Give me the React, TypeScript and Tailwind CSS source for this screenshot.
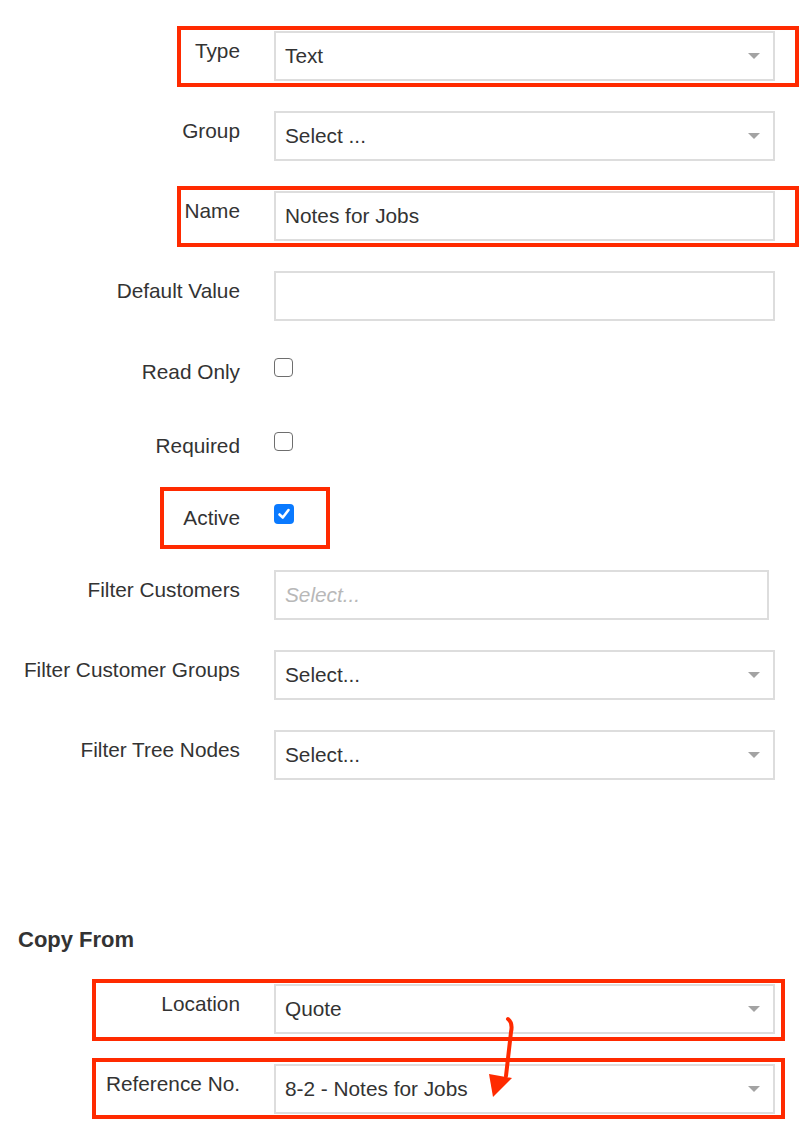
import React from "react";

const Arrow = () => (
  <svg width="12" height="6" viewBox="0 0 12 6" className="shrink-0">
    <path d="M0 0 L12 0 L6 6 Z" fill="#a3a3a3" />
  </svg>
);

function RedBox({ className }: { className: string }) {
  return <div className={"absolute border-4 border-[#ff2a00] pointer-events-none " + className} />;
}

function InputRow({
  label,
  value,
  select,
  placeholder,
  narrow,
  children,
}: {
  label: string;
  value?: string;
  select?: boolean;
  placeholder?: boolean;
  narrow?: boolean;
  children?: React.ReactNode;
}) {
  return (
    <div className="relative flex h-[50px] mb-[30px]">
      {children}
      <div className="w-[240px] shrink-0 text-right pt-[8px] text-[20.8px] leading-[24px] text-[#333]">{label}</div>
      <div
        className={
          "ml-[34px] h-[50px] border-2 border-[#dddddd] bg-white flex items-center pl-[9px] pr-[13px] " +
          (narrow ? "w-[495px]" : "w-[501px]")
        }
      >
        <span
          className={
            "flex-1 text-[20.8px] leading-[24px] " + (placeholder ? "italic text-[#b8b8b8]" : "text-[#333]")
          }
        >
          {value}
        </span>
        {select && <Arrow />}
      </div>
    </div>
  );
}

function CheckRow({
  label,
  checked,
  h,
  children,
}: {
  label: string;
  checked?: boolean;
  h: string;
  children?: React.ReactNode;
}) {
  return (
    <div className={"relative flex " + h}>
      {children}
      <div className="w-[240px] shrink-0 text-right pt-[9px] text-[20.8px] leading-[24px] text-[#333]">{label}</div>
      <div className="ml-[34px] pt-[7px]">
        {checked ? (
          <div className="w-[20px] h-[20px] rounded-[4px] bg-[#0a7aff] flex items-center justify-center">
            <svg width="14" height="14" viewBox="0 0 14 14">
              <path d="M2.5 7.5 L5.8 10.5 L11.5 3" fill="none" stroke="white" strokeWidth="2.6" strokeLinecap="round" strokeLinejoin="round" />
            </svg>
          </div>
        ) : (
          <div className="w-[19px] h-[19px] rounded-[4px] border-[1.5px] border-[#6e6e6e] bg-white" />
        )}
      </div>
    </div>
  );
}

export default function App() {
  return (
    <div className="relative w-[810px] h-[1140px] bg-white overflow-hidden pt-[31px] font-['Liberation_Sans',Arial,sans-serif]">
      <InputRow label="Type" value="Text" select>
        <RedBox className="left-[177px] w-[622px] -top-[5px] -bottom-[6px]" />
      </InputRow>
      <InputRow label="Group" value="Select ..." select />
      <InputRow label="Name" value="Notes for Jobs">
        <RedBox className="left-[177px] w-[622px] -top-[5px] -bottom-[6px]" />
      </InputRow>
      <InputRow label="Default Value" value="" />

      <CheckRow label="Read Only" h="h-[74px]" />
      <CheckRow label="Required" h="h-[72px]" />
      <CheckRow label="Active" checked h="h-[73px]">
        <RedBox className="left-[160px] w-[170px] -top-[10px] h-[62px]" />
      </CheckRow>

      <InputRow label="Filter Customers" value="Select..." placeholder narrow />
      <InputRow label="Filter Customer Groups" value="Select..." select />
      <InputRow label="Filter Tree Nodes" value="Select..." select />

      <div className="mt-[148px] pl-[18px] text-[22px] leading-[24px] font-bold text-[#333]">Copy From</div>

      <div className="mt-[32px]">
        <InputRow label="Location" value="Quote" select>
          <RedBox className="left-[92px] w-[693px] -top-[5px] -bottom-[7px]" />
        </InputRow>
        <InputRow label="Reference No." value="8-2 - Notes for Jobs" select>
          <RedBox className="left-[92px] w-[693px] -top-[6px] -bottom-[5px]" />
        </InputRow>
      </div>

      <svg className="absolute left-[480px] top-[1010px]" width="50" height="95" viewBox="0 0 50 95">
        <path d="M28 9 Q33 13 31 22 L26 66" fill="none" stroke="#ff2a00" strokeWidth="4" strokeLinecap="round" />
        <path d="M9 64 L32 68 L13 87 Z" fill="#ff2a00" />
      </svg>
    </div>
  );
}
